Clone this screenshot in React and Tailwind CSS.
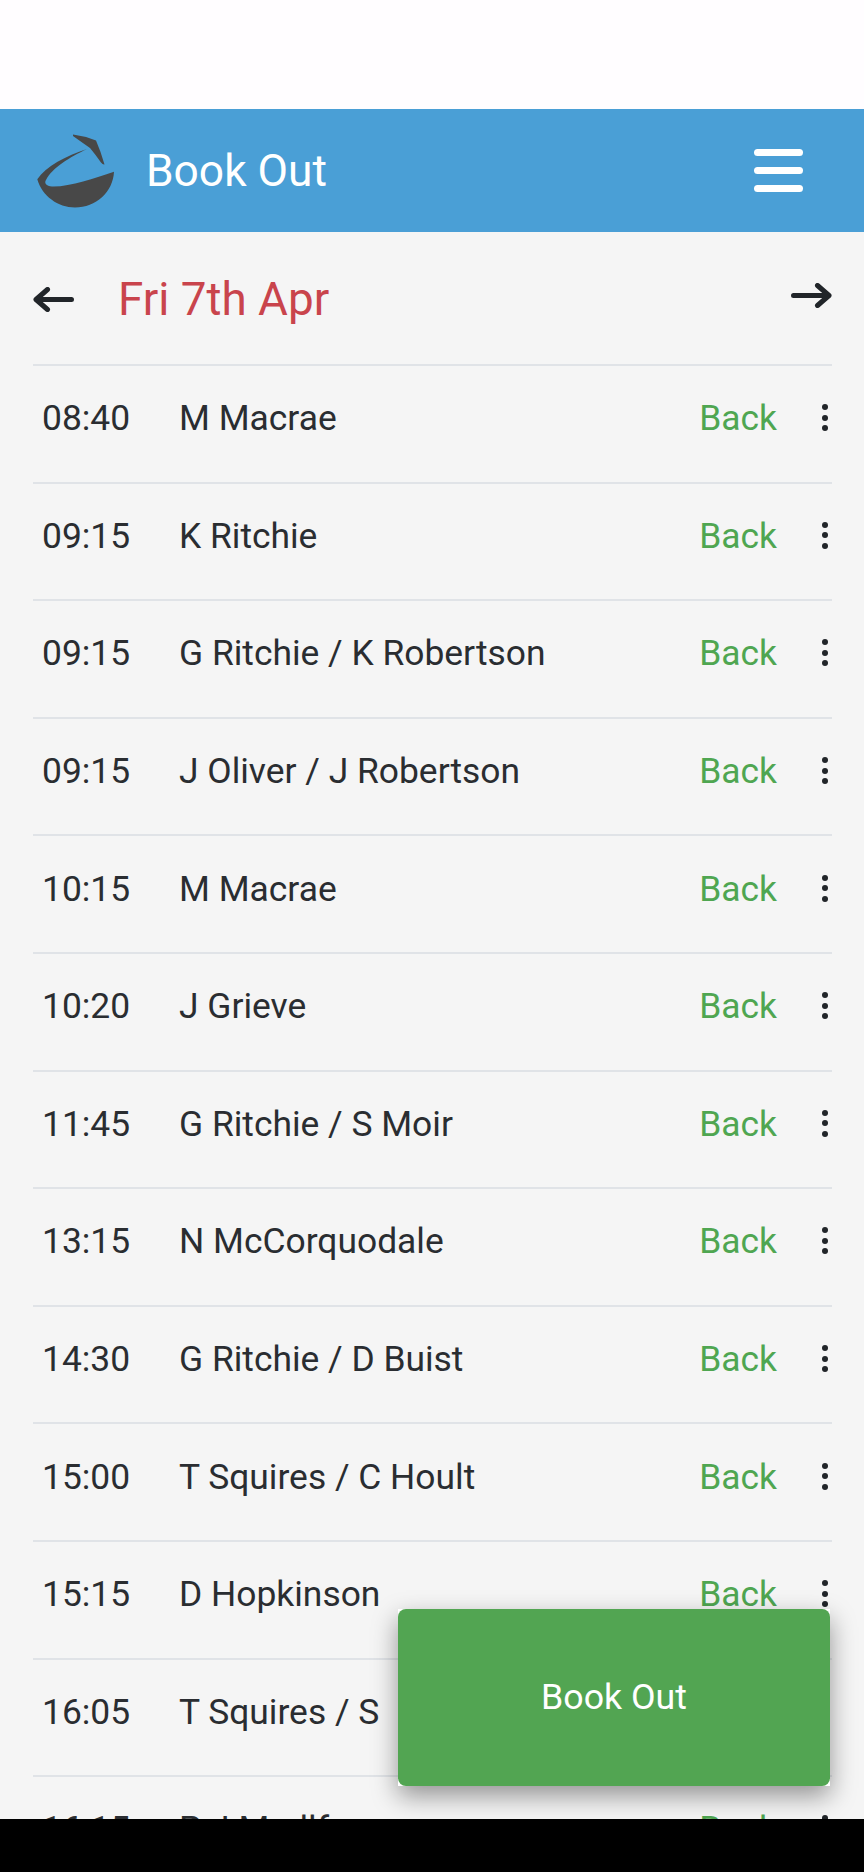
const rows = [
  ["08:40", "M Macrae"],
  ["09:15", "K Ritchie"],
  ["09:15", "G Ritchie / K Robertson"],
  ["09:15", "J Oliver / J Robertson"],
  ["10:15", "M Macrae"],
  ["10:20", "J Grieve"],
  ["11:45", "G Ritchie / S Moir"],
  ["13:15", "N McCorquodale"],
  ["14:30", "G Ritchie / D Buist"],
  ["15:00", "T Squires / C Hoult"],
  ["15:15", "D Hopkinson"],
  ["16:05", "T Squires / S"],
  ["16:15", "P J Medlf"],
];

const Logo = () => (
  <svg viewBox="17 14 78 74" className="w-[78px] h-[74px] shrink-0" fill="#484848">
    <path d="M53 14.5 Q65 16 76 20.5 Q81 32 84.5 44.5 Q83 45 81 42.5 Q75 34 70 28 Q60 21 53 16 Z" />
    <path d="M94 51.7 C74 58 50 67 32 66.5 C26 66 24 63 26 60 C32 48 50 37 67 29 C46 36 26 46 17.3 59.3 C22 76 38 87.5 55 87.5 C76 87.5 93 72 94 51.7 Z" />
  </svg>
);

const Arrow = ({ flip }) => (
  <svg viewBox="0 0 41 25" className={`w-[41px] h-[25px] ${flip ? "rotate-180" : ""}`} fill="none" stroke="#212529" strokeWidth="5" strokeLinecap="round" strokeLinejoin="round">
    <path d="M3 12.5 H38.5 M14.5 2.5 L3 12.5 L14.5 22.5" />
  </svg>
);

const Dots = () => (
  <div className="flex flex-col gap-[4.5px] w-[7px] items-center mb-[2px]">
    <div className="w-[6px] h-[6px] rounded-full bg-[#212529]" />
    <div className="w-[6px] h-[6px] rounded-full bg-[#212529]" />
    <div className="w-[6px] h-[6px] rounded-full bg-[#212529]" />
  </div>
);

export default function App() {
  return (
    <div className="relative h-[1872px] flex flex-col overflow-hidden bg-[#f5f5f5] font-['Roboto',sans-serif]">
      <div className="h-[109px] bg-[#fffdff] shrink-0" />
      <header className="h-[123px] shrink-0 bg-[#4a9fd6] flex items-center pl-[37px] pr-[61px]">
        <Logo />
        <div className="ml-[31px] mt-[2px] text-[44.3px] text-white flex-1">Book Out</div>
        <div className="flex flex-col gap-[11px]">
          <div className="w-[49px] h-[7px] rounded-full bg-white" />
          <div className="w-[49px] h-[7px] rounded-full bg-white" />
          <div className="w-[49px] h-[7px] rounded-full bg-white" />
        </div>
      </header>
      <main className="flex-1 min-h-0 overflow-hidden pl-[33px] pr-[32px]">
        <div className="h-[132px] flex items-center">
          <div className="mt-[3px]"><Arrow /></div>
          <div className="ml-[44px] mt-[4px] flex-1 text-[45.8px] text-[#c9444c]">Fri 7th Apr</div>
          <div className="mb-[5px]"><Arrow flip /></div>
        </div>
        {rows.map(([time, name], i) => (
          <div key={i} className="h-[117.6px] border-t-2 border-[#e0e3e7] flex items-center pb-[10px] text-[35.4px] text-[#2a2d31]">
            <div className="w-[146px] pl-[9px]">{time}</div>
            <div className="flex-1">{name}</div>
            <div className="text-[#4fa651] mr-[44px]">Back</div>
            <Dots />
            <div className="w-[4px]" />
          </div>
        ))}
      </main>
      <div className="h-[53px] shrink-0 bg-black relative" />
      <div className="absolute left-[398px] top-[1609px] w-[432px] h-[177px] bg-white shadow-[0_10px_24px_rgba(0,0,0,0.4)]">
        <button className="w-full h-full rounded-[8px] bg-[#52a552] text-white text-[35.7px]">Book Out</button>
      </div>
    </div>
  );
}
